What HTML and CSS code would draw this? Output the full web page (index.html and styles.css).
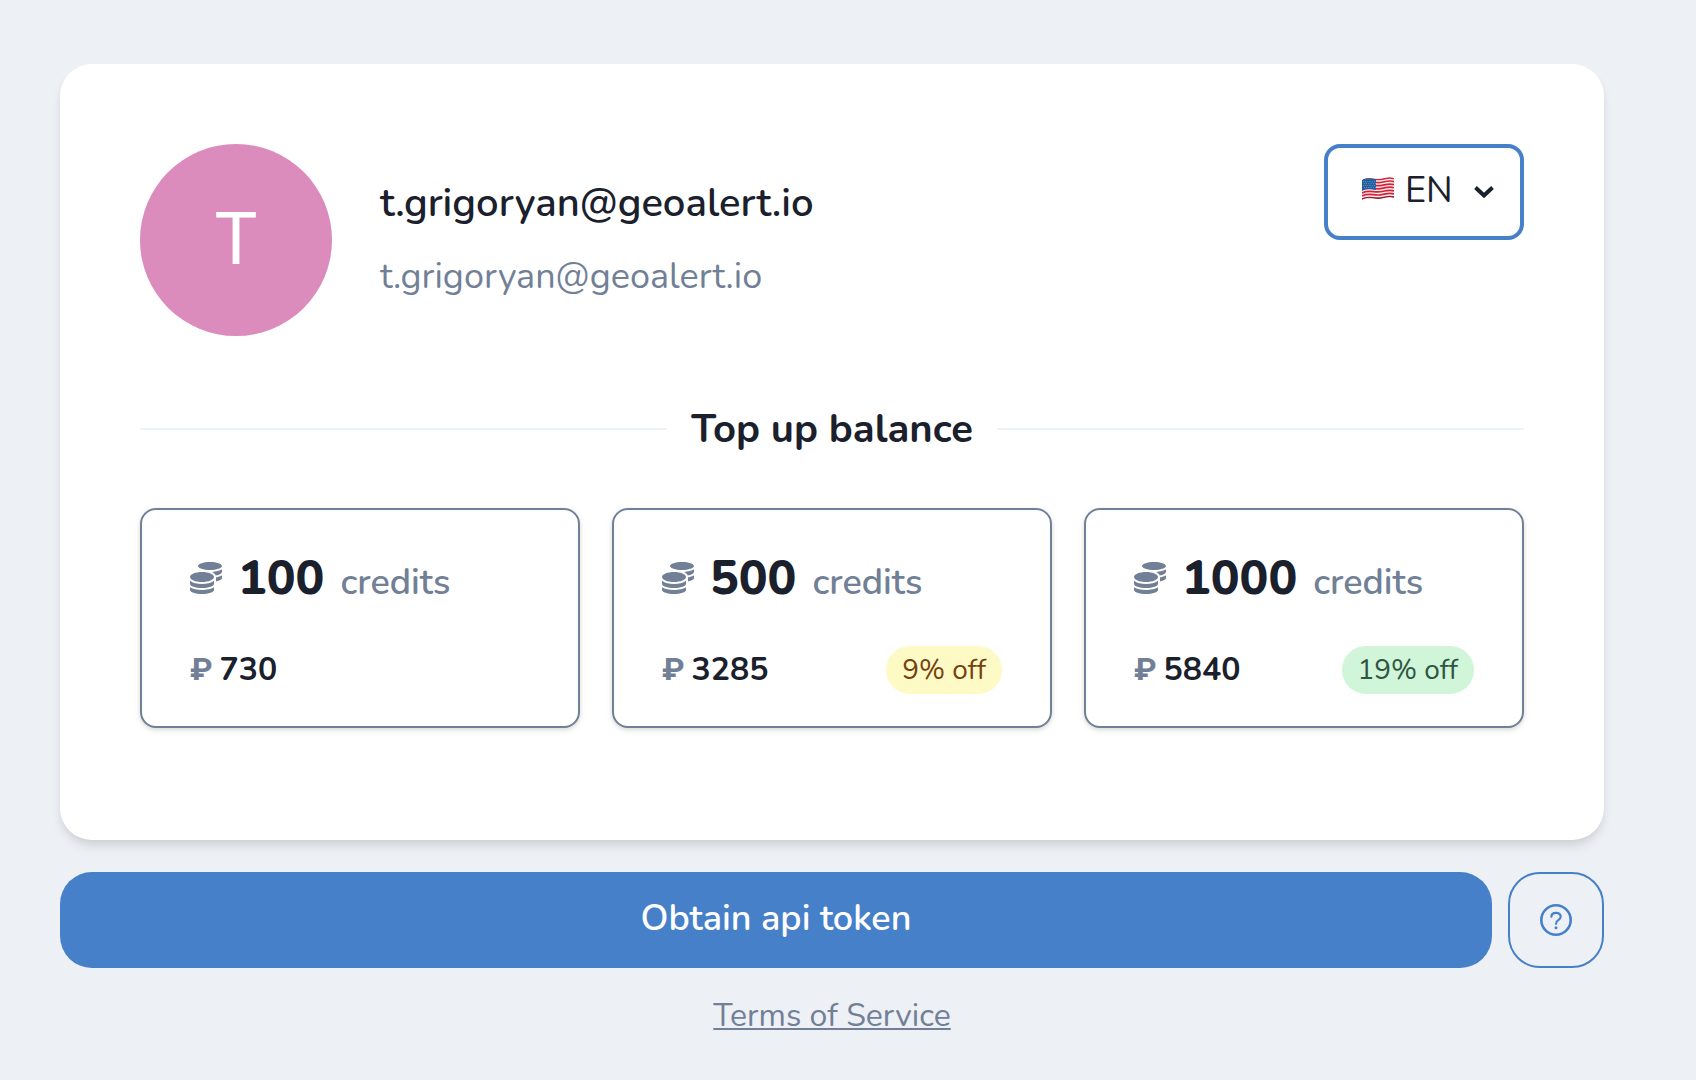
FILE: index.html
```html
<!DOCTYPE html>
<html lang="en">
<head>
  <meta charset="utf-8">
  <meta name="viewport" content="width=device-width, initial-scale=1">
  <title>Top up balance</title>
  <link rel="stylesheet" href="styles.css">
</head>
<body>
  <svg class="sprite" aria-hidden="true">
    <symbol id="coins" viewBox="0 0 512 512">
      <path d="M0 405.3V448c0 35.3 86 64 192 64s192-28.7 192-64v-42.7C342.7 434.4 267.2 448 192 448S41.3 434.4 0 405.3zM320 128c106 0 192-28.7 192-64S426 0 320 0 128 28.7 128 64s86 64 192 64zM0 300.4V352c0 35.3 86 64 192 64s192-28.7 192-64v-51.6c-41.3 34-116.9 51.6-192 51.6S41.3 334.4 0 300.4zm416 11c57.3-11.1 96-31.7 96-55.4v-42.7c-23.2 16.4-57.3 27.6-96 34.5v63.6zM192 160C86 160 0 195.8 0 240s86 80 192 80 192-35.8 192-80-86-80-192-80zm219.3 56.3c60-10.8 100.7-32 100.7-56.3v-42.7c-35.5 25.1-96.5 38.6-160.7 41.8 29.5 14.3 51.2 33.5 60 57.2z"/>
    </symbol>
  </svg>
  <main class="page">
    <section class="card">
      <header class="profile">
        <div class="avatar">T</div>
        <div class="identity">
          <h1 class="name">t.grigoryan@geoalert.io</h1>
          <p class="email">t.grigoryan@geoalert.io</p>
        </div>
        <label class="language">
          <svg class="flag" viewBox="0 0 32 24" aria-hidden="true">
            <defs>
              <clipPath id="wave"><path d="M0 3C6 0 10 2 16 2C22 2 26-1 32 1V21C26 19 22 22 16 22C10 22 6 20 0 23Z"/></clipPath>
            </defs>
            <g clip-path="url(#wave)">
              <path fill="#f4f1f2" d="M0 0H32V24H0Z"/>
              <g fill="none" stroke="#d91f35" stroke-width="1.7">
                <path d="M0 3.5C6 .5 10 2.500 16 2.500C22 2.500 26-.5 32 1.500"/>
                <path d="M0 6.600C6 3.600 10 5.600 16 5.600C22 5.600 26 2.600 32 4.600"/>
                <path d="M0 9.700C6 6.700 10 8.700 16 8.700C22 8.700 26 5.700 32 7.700"/>
                <path d="M0 12.800C6 9.800 10 11.800 16 11.800C22 11.800 26 8.800 32 10.800"/>
                <path d="M0 15.900C6 12.900 10 14.900 16 14.900C22 14.900 26 11.900 32 13.900"/>
                <path d="M0 19C6 16 10 18 16 18C22 18 26 15 32 17"/>
                <path stroke="#9c1c2a" d="M0 22.200C6 19.200 10 21.200 16 21.200C22 21.200 26 18.200 32 20.200"/>
              </g>
              <path fill="#245f9f" d="M0 3C6 0 10 2 14 2V13C10 13 6 11 0 14Z"/>
              <path stroke="#7fa6d2" stroke-width=".8" stroke-dasharray=".8 1.400" d="M1 4.500H14M2 6.500H14M1 8.500H14M2 10.500H14"/>
            </g>
          </svg>
          <select class="language-select" aria-label="Language">
            <option>EN</option>
            <option>RU</option>
          </select>
          <svg class="chevron" viewBox="0 0 20 12" aria-hidden="true"><path d="M1.500 1.500L10 9.500L18.500 1.500"/></svg>
        </label>
      </header>

      <h2 class="divider">Top up balance</h2>

      <div class="plans">
        <button class="plan" type="button">
          <span class="amount"><svg class="coins" aria-hidden="true"><use href="#coins"/></svg><strong class="count">100</strong><span class="unit">credits</span></span>
          <span class="cost"><span class="price"><span class="ruble">₽</span>730</span></span>
        </button>
        <button class="plan" type="button">
          <span class="amount"><svg class="coins" aria-hidden="true"><use href="#coins"/></svg><strong class="count">500</strong><span class="unit">credits</span></span>
          <span class="cost"><span class="price"><span class="ruble">₽</span>3285</span><span class="badge badge-yellow">9% off</span></span>
        </button>
        <button class="plan" type="button">
          <span class="amount"><svg class="coins" aria-hidden="true"><use href="#coins"/></svg><strong class="count">1000</strong><span class="unit">credits</span></span>
          <span class="cost"><span class="price"><span class="ruble">₽</span>5840</span><span class="badge badge-green">19% off</span></span>
        </button>
      </div>
    </section>

    <div class="actions">
      <button class="token" type="button">Obtain api token</button>
      <button class="help" type="button" aria-label="Help">
        <svg class="help-icon" viewBox="0 0 32 32" aria-hidden="true">
          <circle cx="16" cy="16" r="14.700" stroke-width="2.600"/>
          <path stroke-width="2.200" d="M11.400 12.700C11.400 10.200 13.200 8.800 16 8.800S20.700 10.400 20.700 12.500C20.700 14.300 19.700 15.200 18.300 16.100C16.800 17.100 16 17.900 16 19.800"/>
          <circle class="dot" cx="16" cy="23.700" r="1.500"/>
        </svg>
      </button>
    </div>

    <footer class="footer"><a class="terms" href="#terms">Terms of Service</a></footer>
  </main>
</body>
</html>
```
FILE: styles.css
```css
*,
*::before,
*::after {
  box-sizing: border-box;
}

body {
  margin: 0;
  background: #edf1f6;
  color: #1a202c;
  font-family: Nunito, Lato, sans-serif;
}

button,
select {
  margin: 0;
  color: inherit;
  font: inherit;
  cursor: pointer;
}

.sprite {
  display: none;
}

.page {
  padding: 64px 92px 16px 60px;
}

.card {
  padding: 80px 80px 112px;
  border-radius: 32px;
  background: #fff;
  box-shadow: 0 8px 12px -2px rgba(0, 0, 0, 0.1), 0 4px 8px -2px rgba(0, 0, 0, 0.06);
}

.profile {
  display: flex;
  align-items: flex-start;
  gap: 48px;
}

.avatar {
  display: flex;
  flex: none;
  align-items: center;
  justify-content: center;
  width: 192px;
  height: 192px;
  border-radius: 50%;
  background: #dc8cbc;
  color: #fff;
  font: 72px/1 Roboto, sans-serif;
}

.identity {
  flex: 1;
  padding-top: 28px;
}

.name {
  margin: 0 0 16px;
  font-size: 40px;
  font-weight: 600;
  line-height: 62px;
}

.email {
  margin: 0;
  color: #718096;
  font-size: 36px;
  line-height: 54px;
}

.language {
  display: flex;
  flex: none;
  align-items: center;
  width: 200px;
  height: 96px;
  padding: 0 26px 0 34px;
  border: 4px solid #4680c8;
  border-radius: 16px;
}

.flag {
  width: 32px;
  height: 24px;
  margin-bottom: 6px;
}

.language-select {
  flex: 1;
  min-width: 0;
  padding: 0 0 2px 11px;
  border: 0;
  outline: 0;
  background: none;
  font-size: 36px;
  line-height: 48px;
  appearance: none;
}

.chevron {
  width: 20px;
  height: 12px;
  fill: none;
  stroke: currentColor;
  stroke-width: 4;
}

.divider {
  display: flex;
  align-items: center;
  gap: 24px;
  margin: 64px 0 50px;
  font-size: 40px;
  font-weight: 700;
  line-height: 58px;
}

.divider::before,
.divider::after {
  flex: 1;
  height: 2px;
  background: #edf2f7;
  content: "";
}

.plans {
  display: grid;
  grid-template-columns: repeat(3, 1fr);
  gap: 32px;
}

.plan {
  display: flex;
  flex-direction: column;
  gap: 32px;
  padding: 32px 48px;
  border: 2px solid #718096;
  border-radius: 16px;
  background: #fff;
  box-shadow: 0 2px 6px rgba(0, 0, 0, 0.1), 0 2px 4px rgba(0, 0, 0, 0.06);
  text-align: left;
}

.amount {
  display: flex;
  align-items: baseline;
  gap: 16px;
  height: 72px;
}

.coins {
  width: 32px;
  height: 32px;
  fill: #718096;
}

.count {
  font-size: 48px;
  font-weight: 800;
  line-height: 72px;
}

.unit {
  color: #718096;
  font-size: 36px;
  font-weight: 600;
  line-height: 48px;
}

.cost {
  display: flex;
  align-items: center;
  justify-content: space-between;
  width: 100%;
  height: 48px;
}

.price {
  font-size: 32px;
  font-weight: 700;
  line-height: 48px;
}

.ruble {
  margin-right: 7px;
  color: #718096;
  font-family: Roboto, sans-serif;
  line-height: 1;
}

.badge {
  padding: 0 16px;
  border-radius: 24px;
  font-size: 28px;
  line-height: 48px;
}

.badge-yellow {
  background: #fefac6;
  color: #744210;
}

.badge-green {
  background: #d0f5d8;
  color: #2f5543;
}

.actions {
  display: flex;
  gap: 16px;
  margin-top: 32px;
}

.token {
  flex: 1;
  height: 96px;
  padding: 0 0 4px;
  border: 0;
  border-radius: 32px;
  background: #4680c8;
  color: #fff;
  font-size: 36px;
  font-weight: 600;
}

.help {
  display: flex;
  align-items: center;
  justify-content: center;
  width: 96px;
  height: 96px;
  padding: 0;
  border: 2px solid #4680c8;
  border-radius: 32px;
  background: none;
  color: #4680c8;
}

.help-icon {
  width: 32px;
  height: 32px;
  fill: none;
  stroke: currentColor;
  stroke-linecap: round;
}

.dot {
  fill: currentColor;
  stroke: none;
}

.footer {
  margin-top: 24px;
  text-align: center;
}

.terms {
  color: #718096;
  font-size: 32px;
  line-height: 48px;
  text-decoration-thickness: 2px;
  text-underline-offset: 2px;
}
```
